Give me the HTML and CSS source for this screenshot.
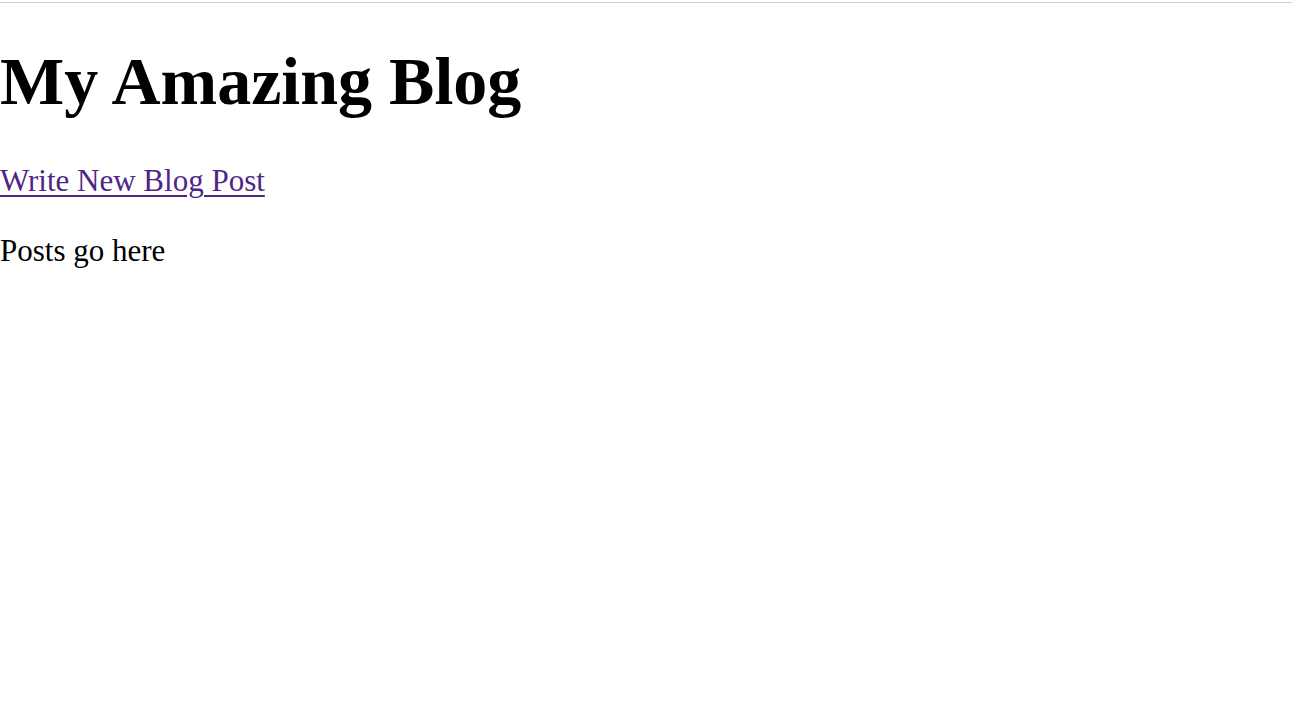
FILE: index.html
```html
<!DOCTYPE html>
<html>
<head>
<meta charset="utf-8">
<link rel="stylesheet" href="styles.css">
</head>
<body>
<div class="topline"></div>
<main class="page">
  <h1 class="title">My Amazing Blog</h1>
  <p class="nav"><a class="new-post" href="#">Write New Blog Post</a></p>
  <p class="posts">Posts go here</p>
</main>
</body>
</html>
```
FILE: styles.css
```css
html, body {
  margin: 0;
  padding: 0;
  background: #fff;
}
body {
  font-family: "Liberation Serif", "Times New Roman", serif;
  color: #000;
}
.topline {
  margin-top: 2px;
  height: 1px;
  background: #cfcfcf;
}
.page {
  padding: 0;
}
.title {
  font-size: 68px;
  font-weight: bold;
  line-height: 68px;
  margin: 44px 0 0 0;
}
.nav {
  font-size: 31px;
  line-height: 36px;
  margin: 48px 0 0 0;
}
.new-post {
  color: #4f2688;
  text-decoration: underline;
  text-decoration-thickness: 2px;
  text-underline-offset: 4px;
}
.posts {
  font-size: 31px;
  line-height: 36px;
  margin: 34px 0 0 0;
}
```
